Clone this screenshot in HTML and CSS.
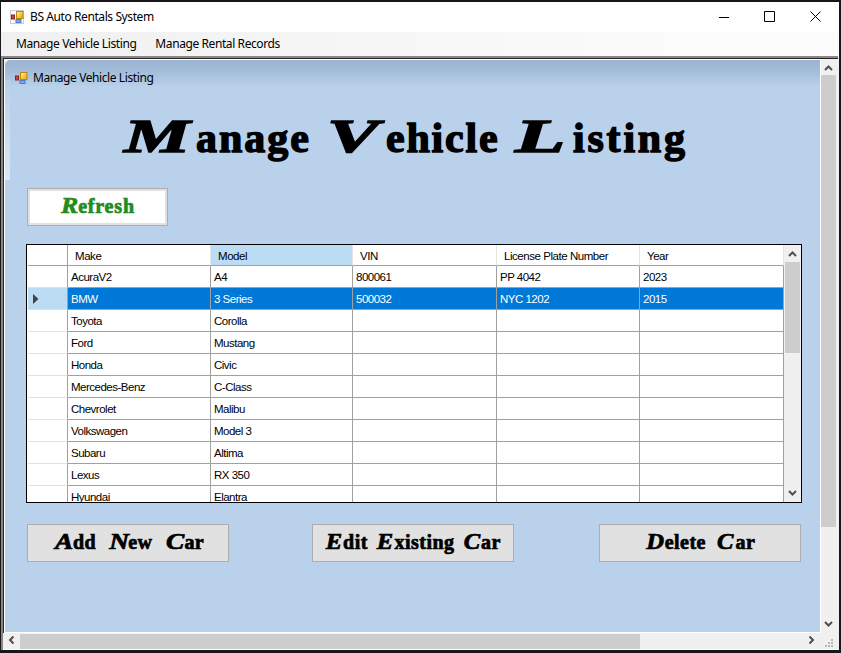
FILE: index.html
```html
<!DOCTYPE html>
<html lang="en">
<head>
<meta charset="utf-8">
<title>BS Auto Rentals System</title>
<link rel="stylesheet" href="styles.css">
</head>
<body>
<svg class="defs" width="0" height="0">
  <defs>
    <linearGradient id="gold" x1="0" y1="0" x2="1" y2="1"><stop offset="0" stop-color="#fff0a8"/><stop offset=".5" stop-color="#fbc93e"/><stop offset="1" stop-color="#dfa01a"/></linearGradient>
    <symbol id="form" viewBox="0 0 14 14">
      <rect x="6.5" y="1.500" width="6.500" height="7" fill="url(#gold)" stroke="#b98718"/>
      <rect x="1.500" y="5" width="3" height="4" fill="#c44a40" stroke="#8d1f1c"/>
      <rect x="6" y="9.5" width="5" height="3" fill="#78a8ee" stroke="#4d78c4"/>
    </symbol>
    <symbol id="up" viewBox="0 0 9 6"><path d="M1 5 4.5 1.5 8 5" fill="none" stroke="#505050" stroke-width="2"/></symbol>
  </defs>
</svg>
<div class="window">
  <header class="titlebar">
    <svg class="app-icon" width="14" height="14"><rect x=".5" y=".5" width="13" height="13" fill="#fff" stroke="#c5cbd3"/><use href="#form" width="14" height="14"/></svg>
    <span class="ui app-title">BS Auto Rentals System</span>
    <svg class="controls" width="102" height="12" viewBox="0 0 102 12" fill="none" stroke="#000"><path d="M0 6.5h10M45.500.5h10v10h-10z"/><path d="M91.500.5l10 10M101.500.5l-10 10"/></svg>
  </header>
  <nav class="menu ui"><span class="m1">Manage Vehicle Listing</span><span class="m2">Manage Rental Records</span></nav>
  <div class="client">
    <div class="upper">
      <main class="child">
        <div class="child-title"><svg width="14" height="14"><use href="#form"/></svg><span class="ui">Manage Vehicle Listing</span></div>
        <h1 class="script heading"><span class="w1"><i>M</i>anage</span><span class="w2"><i>V</i>ehicle</span><span class="w3"><i>L</i>isting</span></h1>
        <button class="refresh script"><span><i>R</i>efresh</span></button>
        <div class="grid">
          <div class="table">
            <div class="row head"><b></b><span>Make</span><span class="hot">Model</span><span>VIN</span><span>License Plate Number</span><span>Year</span></div>
            <div class="row"><b></b><span>AcuraV2</span><span>A4</span><span>800061</span><span>PP 4042</span><span>2023</span></div>
            <div class="row selected"><b><svg width="6" height="10"><path d="M0 0v10l5.500-5z" fill="#3b454d"/></svg></b><span>BMW</span><span>3 Series</span><span>500032</span><span>NYC 1202</span><span>2015</span></div>
            <div class="row"><b></b><span>Toyota</span><span>Corolla</span><span></span><span></span><span></span></div>
            <div class="row"><b></b><span>Ford</span><span>Mustang</span><span></span><span></span><span></span></div>
            <div class="row"><b></b><span>Honda</span><span>Civic</span><span></span><span></span><span></span></div>
            <div class="row"><b></b><span>Mercedes-Benz</span><span>C-Class</span><span></span><span></span><span></span></div>
            <div class="row"><b></b><span>Chevrolet</span><span>Malibu</span><span></span><span></span><span></span></div>
            <div class="row"><b></b><span>Volkswagen</span><span>Model 3</span><span></span><span></span><span></span></div>
            <div class="row"><b></b><span>Subaru</span><span>Altima</span><span></span><span></span><span></span></div>
            <div class="row"><b></b><span>Lexus</span><span>RX 350</span><span></span><span></span><span></span></div>
            <div class="row"><b></b><span>Hyundai</span><span>Elantra</span><span></span><span></span><span></span></div>
          </div>
          <div class="vscroll inner"><svg class="arrow" width="9" height="6"><use href="#up"/></svg><div class="thumb"></div><svg class="arrow down" width="9" height="6"><use href="#up"/></svg></div>
        </div>
        <div class="actions script">
          <button><span class="a1"><i>A</i>dd <i>N</i>ew <i>C</i>ar</span></button>
          <button><span class="a2"><i>E</i>dit <i>E</i>xisting <i>C</i>ar</span></button>
          <button><span class="a3"><i>D</i>elete <i>C</i>ar</span></button>
        </div>
      </main>
      <div class="vscroll outer"><svg class="arrow" width="9" height="6"><use href="#up"/></svg><div class="thumb"></div><svg class="arrow down" width="9" height="6"><use href="#up"/></svg></div>
    </div>
    <div class="hscroll">
      <svg class="harrow left" width="9" height="6"><use href="#up"/></svg><div class="hthumb"></div>
      <svg class="harrow right" width="9" height="6"><use href="#up"/></svg>
      <svg class="grip" width="8" height="8" fill="#b8b8b8"><path d="M6 0h2v2h-2zM3 3h2v2h-2zM6 3h2v2h-2zM0 6h2v2h-2zM3 6h2v2h-2zM6 6h2v2h-2z"/></svg>
    </div>
  </div>
</div>
</body>
</html>
```
FILE: styles.css
```css
* { box-sizing: border-box; }
body { margin: 0; width: 841px; height: 653px; background: #17161a; padding: 2px 2px 3px 1px; overflow: hidden; }
.defs { display: block; position: absolute; }
.window { height: 648px; background: #f0f0f0; display: flex; flex-direction: column; }
.ui { font: 12px/16px "Noto Sans", sans-serif; letter-spacing: -0.41px; color: #000; white-space: nowrap; }
.titlebar { height: 30px; background: #fff; display: flex; align-items: center; padding: 0 18px 0 9px; }
.app-title { margin-left: 6px; }
.controls { margin-left: auto; }
.menu { height: 24px; display: flex; align-items: center; padding-left: 15px; background: linear-gradient(90deg, #f0f0f0, #fcfcfc 85%); }
.m2 { margin-left: 19px; }
.client { flex: 1; border: solid #8c8782; border-width: 2px 0 0 2px; margin-right: 1px; display: flex; flex-direction: column; }
.upper { height: 575px; display: flex; border-left: 1px solid #252525; border-top: 1px solid #252525; }
.child { width: 817px; border: 1px solid #fff; border-top-left-radius: 6px; background: linear-gradient(#9ab4d2, #9fb9d7 8px, #b9d1ea 27px); padding-left: 22px; position: relative; }
.child::before { content: ""; position: absolute; left: 0; top: 20px; width: 5px; height: 100px; background: linear-gradient(#b9d1ea, #dbe8f5); }
.child-title { height: 36px; margin-left: -13px; display: flex; align-items: center; gap: 5px; }
.script { font-family: "Liberation Serif", serif; font-weight: bold; }
.script span { white-space: nowrap; }
.script i { display: inline-block; font-size: 1.12em; line-height: 1; letter-spacing: 0; transform-origin: 0 50%; }
.heading { margin: 9px 0 0 97px; height: 64px; font-size: 42px; line-height: 66px; display: flex; letter-spacing: 2px; -webkit-text-stroke: 1.4px #000; }
.w1 { width: 203px; }
.w1 i { width: 72px; transform: scaleX(1.58); }
.w2 { width: 188px; letter-spacing: 1.8px; }
.w2 i { width: 59px; transform: scaleX(1.65); }
.w3 { letter-spacing: 2.8px; }
.w3 i { width: 58px; transform: scaleX(1.75); }
button { font: inherit; color: #000; border: 1px solid #adadad; background: #e1e1e1; padding: 0; display: flex; align-items: center; justify-content: center; }
.refresh { width: 141px; height: 38px; margin-top: 19px; background: #fff; box-shadow: inset 0 0 0 2px #e1e1e1; color: #228b22; font-family: "Liberation Serif", serif; font-weight: bold; font-size: 20px; letter-spacing: .8px; -webkit-text-stroke: .7px; }
.refresh span { position: relative; top: -1px; left: -1px; }
.refresh i { width: 20px; transform: scaleX(1.15); }
.grid { width: 776px; height: 259px; margin: 18px 0 0 -1px; border: 1px solid #000; background: #fff; display: flex; overflow: hidden; }
.table { width: 757px; overflow: hidden; padding-left: 1px; }
.row { display: grid; grid-template-columns: 40px 143px 142px 144px 143px 144px; height: 22px; font: 11.5px/23px "Liberation Sans", sans-serif; letter-spacing: -0.5px; color: #000; }
.row > * { height: 22px; border: solid #a0a0a0; border-width: 0 1px 1px 0; padding-left: 3px; white-space: nowrap; }
.row b { border-bottom-color: #e1e1e1; padding: 6px 0 0 5px; line-height: 0; }
.head { height: 21px; line-height: 22px; letter-spacing: -0.45px; }
.head > * { height: 21px; }
.head span { border-right-color: #e5e5e5; padding-left: 7px; }
.head b { border-bottom-color: #a0a0a0; }
.head .hot { background: #bcdcf4; }
.selected span { background: #0078d7; color: #fff; }
.selected b { background: #bcdcf4; }
.vscroll { width: 17px; background: #f0f0f0; display: flex; flex-direction: column; align-items: center; }
.arrow { flex: none; margin-top: 6px; }
.thumb { width: 15px; background: #cdcdcd; margin-top: 5px; }
.down { transform: rotate(180deg); margin: auto 0 6px; }
.inner .thumb { height: 91px; }
.outer { width: 15px; }
.outer .thumb { height: 452px; margin-top: 4px; }
.actions { display: flex; width: 774px; margin-top: 21px; font-size: 20px; -webkit-text-stroke: .7px #000; }
.actions button { width: 202px; height: 38px; margin-right: 83px; flex: none; }
.actions button:nth-child(2) { margin-right: 85px; }
.actions button:last-child { margin-right: 0; }
.actions span { position: relative; top: -1px; }
.actions i { width: 19px; transform: scaleX(1.1); }
.actions .a1 { left: -1px; letter-spacing: .3px; word-spacing: 4px; }
.actions .a1 i { width: 23px; transform: scaleX(1.22); }
.actions .a2 { left: -1px; letter-spacing: .5px; word-spacing: 1px; }
.actions .a2 i { width: 20px; }
.actions .a3 i { width: 22px; transform: scaleX(1.1); }
.actions .a3 { left: -1px; letter-spacing: .5px; word-spacing: 2px; }
.hscroll { flex: 1; display: flex; align-items: center; border-bottom: 1px solid #fff; }
.harrow { flex: none; position: relative; top: -1px; }
.left { transform: rotate(-90deg); margin-left: 4px; }
.hthumb { width: 620px; height: 15px; background: #cdcdcd; margin-left: 4px; }
.right { transform: rotate(90deg); margin-left: 167px; }
.grip { margin: 4px 0 0 9px; }
```
